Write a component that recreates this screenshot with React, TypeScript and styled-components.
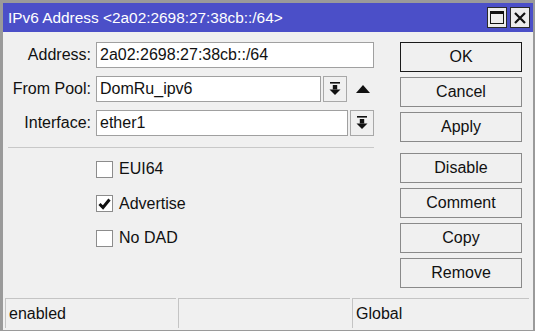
import React from 'react';
import styled, { createGlobalStyle } from 'styled-components';

const GlobalStyle = createGlobalStyle`
  html, body {
    margin: 0;
    padding: 0;
    background: #a6a6a6;
  }
  body {
    font-family: 'Liberation Sans', Arial, sans-serif;
  }
`;

const Window = styled.div`
  width: 535px;
  height: 331px;
  box-sizing: border-box;
  border: 3px solid #9a9a9a;
  border-right-width: 2px;
  border-bottom-width: 1px;
  background: #f0f0f0;
  display: flex;
  flex-direction: column;
`;

const TitleBar = styled.div`
  height: 29px;
  background: #4b4fc8;
  display: flex;
  align-items: center;
  padding: 0 3px 0 5px;
  color: #fff;
  font-size: 15.4px;
`;

const Title = styled.div`
  flex: 1;
`;

const TitleButton = styled.div`
  width: 20px;
  height: 21px;
  box-sizing: border-box;
  background: #ececec;
  border: 1px solid #2a2a2a;
  margin-left: 3px;
  display: flex;
  align-items: center;
  justify-content: center;
`;

const Body = styled.div`
  flex: 1;
  display: flex;
  padding: 10px 11px 0 5px;
`;

const Form = styled.div`
  width: 369px;
  display: flex;
  flex-direction: column;
`;

const Row = styled.div`
  display: flex;
  align-items: center;
  height: 26px;
  margin-bottom: 8px;
`;

const Label = styled.div`
  width: 88px;
  box-sizing: border-box;
  text-align: right;
  padding-right: 5px;
  font-size: 16px;
  color: #111;
`;

const Input = styled.div<{ $width: number }>`
  width: ${p => p.$width}px;
  height: 26px;
  box-sizing: border-box;
  background: #fff;
  border: 1px solid #a0a0a0;
  font-size: 16px;
  color: #111;
  padding-left: 3px;
  display: flex;
  align-items: center;
`;

const DropButton = styled.div`
  width: 24px;
  height: 26px;
  box-sizing: border-box;
  margin-left: 2px;
  border: 1px solid #a8a8a8;
  background: #f0f0f0;
  display: flex;
  align-items: center;
  justify-content: center;
`;

const UpArrow = styled.div`
  margin-left: 9px;
  display: flex;
  align-items: center;
`;

const Separator = styled.div`
  height: 1px;
  background: #c8c8c8;
  margin: 3px 3px 12px 0;
`;

const CheckRow = styled.div`
  display: flex;
  align-items: center;
  height: 18px;
  margin: 0 0 16.5px 88px;
  font-size: 16px;
  color: #111;
`;

const Box = styled.div`
  width: 17px;
  height: 17px;
  box-sizing: border-box;
  border: 1px solid #8c8c8c;
  background: #fff;
  margin-right: 6px;
  display: flex;
  align-items: center;
  justify-content: center;
`;

const Buttons = styled.div`
  margin-left: 23px;
  display: flex;
  flex-direction: column;
  gap: 5px;
`;

const Button = styled.div<{ $default?: boolean; $gap?: boolean }>`
  width: 122px;
  height: 30px;
  box-sizing: border-box;
  border: 1px solid ${p => (p.$default ? '#1a1a1a' : '#8a8a8a')};
  background: #f0f0f0;
  font-size: 16px;
  color: #111;
  display: flex;
  align-items: center;
  justify-content: center;
  margin-top: ${p => (p.$gap ? '6px' : '0')};
`;

const StatusBar = styled.div`
  display: flex;
  gap: 2px;
  padding: 0 4px 2px 2px;
  height: 30px;
`;

const StatusCell = styled.div<{ $width: number }>`
  width: ${p => p.$width}px;
  box-sizing: border-box;
  border-top: 1px solid #c4c4c4;
  border-left: 1px solid #c4c4c4;
  font-size: 16px;
  color: #111;
  padding-left: 3px;
  display: flex;
  align-items: center;
`;

const DropIcon = () => (
  <svg width="12" height="14" viewBox="0 0 12 14">
    <rect x="1" y="0" width="10" height="1.6" fill="#111" />
    <rect x="3.8" y="3" width="4.4" height="4.5" fill="#111" />
    <polygon points="0.5,7.5 11.5,7.5 6,13" fill="#111" />
  </svg>
);

export default function App() {
  return (
    <>
      <GlobalStyle />
      <Window>
        <TitleBar>
          <Title>IPv6 Address &lt;2a02:2698:27:38cb::/64&gt;</Title>
          <TitleButton>
            <svg width="14" height="13" viewBox="0 0 14 13">
              <rect x="0.5" y="0.5" width="13" height="12" fill="none" stroke="#111" />
              <rect x="0.5" y="0.5" width="13" height="2.5" fill="#111" />
            </svg>
          </TitleButton>
          <TitleButton>
            <svg width="12" height="12" viewBox="0 0 12 12">
              <path d="M1 1 L11 11 M11 1 L1 11" stroke="#111" strokeWidth="2.2" />
            </svg>
          </TitleButton>
        </TitleBar>
        <Body>
          <Form>
            <Row>
              <Label>Address:</Label>
              <Input $width={278}>2a02:2698:27:38cb::/64</Input>
            </Row>
            <Row>
              <Label>From Pool:</Label>
              <Input $width={225}>DomRu_ipv6</Input>
              <DropButton><DropIcon /></DropButton>
              <UpArrow>
                <svg width="14" height="8" viewBox="0 0 14 8">
                  <polygon points="0,8 14,8 7,0" fill="#111" />
                </svg>
              </UpArrow>
            </Row>
            <Row>
              <Label>Interface:</Label>
              <Input $width={252}>ether1</Input>
              <DropButton><DropIcon /></DropButton>
            </Row>
            <Separator />
            <CheckRow>
              <Box />
              EUI64
            </CheckRow>
            <CheckRow>
              <Box>
                <svg width="13" height="12" viewBox="0 0 13 12">
                  <path d="M1.5 6 L5 9.5 L11.5 1.5" fill="none" stroke="#111" strokeWidth="3" />
                </svg>
              </Box>
              Advertise
            </CheckRow>
            <CheckRow>
              <Box />
              No DAD
            </CheckRow>
          </Form>
          <Buttons>
            <Button $default>OK</Button>
            <Button>Cancel</Button>
            <Button>Apply</Button>
            <Button $gap>Disable</Button>
            <Button>Comment</Button>
            <Button>Copy</Button>
            <Button>Remove</Button>
          </Buttons>
        </Body>
        <StatusBar>
          <StatusCell $width={171}>enabled</StatusCell>
          <StatusCell $width={172}>&nbsp;</StatusCell>
          <StatusCell $width={177}>Global</StatusCell>
        </StatusBar>
      </Window>
    </>
  );
}
